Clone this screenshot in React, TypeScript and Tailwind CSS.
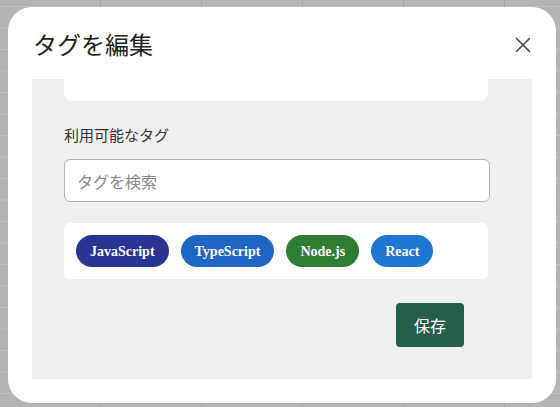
import { X } from 'lucide-react';

const tags = [
  { name: 'JavaScript', color: 'bg-[#283593]' },
  { name: 'TypeScript', color: 'bg-[#1f65c2]' },
  { name: 'Node.js', color: 'bg-[#2e7d32]' },
  { name: 'React', color: 'bg-[#1f77d4]' },
];

export default function App() {
  return (
    <div className="h-[407px] w-[560px] overflow-hidden bg-[#b4b4b4] bg-[linear-gradient(to_right,#a5a5a5_1px,transparent_1px),linear-gradient(to_bottom,#c2c2c2_1px,transparent_1px)] bg-[size:101px_21.5px] bg-[position:-1px_6px] pt-[7px] pl-[8px]">
      <div className="flex h-[396px] w-[548px] flex-col rounded-[24px] bg-white font-['Noto_Sans_CJK_JP','Noto_Sans',sans-serif]">
        <div className="flex h-[72px] items-center justify-between pl-[25px] pr-[20px]">
          <h2 className="pt-[2px] text-[24px] leading-none text-[#222]">タグを編集</h2>
          <button className="mt-[4px] text-[#444]">
            <X className="h-[26px] w-[26px]" strokeWidth={1.4} />
          </button>
        </div>

        <div className="mx-[24px] flex h-[300px] flex-col overflow-hidden bg-[#efefef] pl-[32px] pr-[44px]">
          <div className="h-[22px] rounded-b-[8px] bg-white" />

          <label className="mt-[22px] text-[15px] leading-[24px] text-[#333]">利用可能なタグ</label>

          <input
            className="mt-[12px] h-[43px] w-[426px] rounded-[6px] border border-[#a9b9b3] bg-white px-[12px] text-[16px] text-[#333] outline-none placeholder:text-[#888]"
            placeholder="タグを検索"
          />

          <div className="mt-[21px] flex h-[56px] items-center gap-[12px] rounded-[6px] bg-white px-[12px]">
            {tags.map((t) => (
              <span
                key={t.name}
                className={`${t.color} flex h-[32px] items-center rounded-full px-[14px] font-['Liberation_Serif',serif] text-[14px] font-bold text-white`}
              >
                {t.name}
              </span>
            ))}
          </div>

          <div className="mt-[24px] flex justify-end pr-[24px]">
            <button className="h-[44px] w-[68px] rounded-[4px] bg-[#225e4a] text-[16px] text-white">保存</button>
          </div>
        </div>
      </div>
    </div>
  );
}
